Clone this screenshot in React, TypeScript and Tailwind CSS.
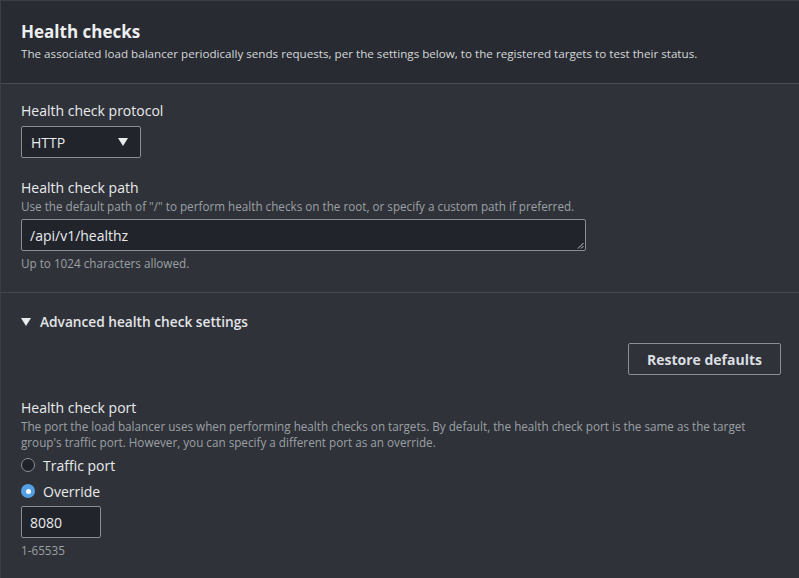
export default function App() {
  const font = { fontFamily: '"Open Sans", "Noto Sans", Arial, sans-serif' };
  return (
    <div className="w-[799px] h-[578px] bg-[#2f3238] border-l border-t border-[#3b3e44] overflow-hidden text-[#e9ebed]" style={font}>
      <div className="bg-[#282b31] border-b border-[#494c53] px-5 pt-[19px] h-[83px]">
        <h2 className="text-[17px] font-bold leading-[24px] text-[#eceef0]">Health checks</h2>
        <p className="text-[11.65px] leading-[18px] mt-[1px] text-[#d5d8dc]">
          The associated load balancer periodically sends requests, per the settings below, to the registered targets to test their status.
        </p>
      </div>

      <div className="px-5 pt-[17px] h-[209px] border-b border-[#44474d]">
        <label className="block text-[14px] leading-[20px] font-medium">Health check protocol</label>
        <div className="mt-[5px] w-[120px] h-[32px] bg-[#21242b] border border-[#8a8e95] rounded-[2px] flex items-center justify-between pl-[9px] pr-[12px]">
          <span className="text-[14px] font-medium">HTTP</span>
          <svg width="10" height="8" viewBox="0 0 10 8"><path d="M0 0 H10 L5 8 Z" fill="#e9ebed" /></svg>
        </div>

        <label className="block mt-[20px] text-[14px] leading-[20px] font-medium">Health check path</label>
        <p className="text-[11.7px] leading-[16px] text-[#9ca0a6]">
          Use the default path of "/" to perform health checks on the root, or specify a custom path if preferred.
        </p>
        <div className="relative mt-[5px] w-[565px] h-[32px] bg-[#21242b] border border-[#8a8e95] rounded-[2px] flex items-center pl-[8px]">
          <span className="text-[14px]">/api/v1/healthz</span>
          <svg className="absolute right-[1px] bottom-[1px]" width="7" height="7" viewBox="0 0 7 7">
            <path d="M6.5 1 L1 6.5 M6.5 4 L4 6.5" stroke="#c4c7cc" strokeWidth="1" />
          </svg>
        </div>
        <p className="mt-[4px] text-[11.7px] leading-[16px] text-[#9ca0a6]">Up to 1024 characters allowed.</p>
      </div>

      <div className="pl-5 pr-[18px] pt-[19px]">
        <div className="flex items-center gap-[9px]">
          <svg width="10" height="8" viewBox="0 0 10 8"><path d="M0 0 H10 L5 8 Z" fill="#e9ebed" /></svg>
          <span className="text-[13.7px] leading-[20px] font-semibold text-[#e3e5e8]">Advanced health check settings</span>
        </div>

        <div className="flex justify-end mt-[11px]">
          <button className="w-[153px] h-[32px] border border-[#8a8e95] rounded-[2px] text-[14px] font-bold text-[#dcdfe2]">
            Restore defaults
          </button>
        </div>

        <label className="block mt-[23px] text-[14px] leading-[20px] font-medium">Health check port</label>
        <p className="text-[11.7px] leading-[16px] text-[#9ca0a6] w-[735px]">
          The port the load balancer uses when performing health checks on targets. By default, the health check port is the same as the target group's traffic port. However, you can specify a different port as an override.
        </p>

        <div className="mt-[5px] flex items-center gap-[8px] h-[20px]">
          <span className="w-[14px] h-[14px] rounded-full border-[1.5px] border-[#8a8e95] bg-[#1f2228]" />
          <span className="text-[14px] font-medium">Traffic port</span>
        </div>
        <div className="mt-[6px] flex items-center gap-[8px] h-[20px]">
          <span className="w-[14px] h-[14px] rounded-full bg-[#539fe5] flex items-center justify-center">
            <span className="w-[5px] h-[5px] rounded-full bg-white" />
          </span>
          <span className="text-[14px] font-medium">Override</span>
        </div>
        <div className="mt-[5px] w-[80px] h-[32px] bg-[#21242b] border border-[#8a8e95] rounded-[2px] flex items-center pl-[8px]">
          <span className="text-[14px]">8080</span>
        </div>
        <p className="mt-[4px] text-[11.7px] leading-[16px] text-[#9ca0a6]">1-65535</p>
      </div>
    </div>
  );
}
